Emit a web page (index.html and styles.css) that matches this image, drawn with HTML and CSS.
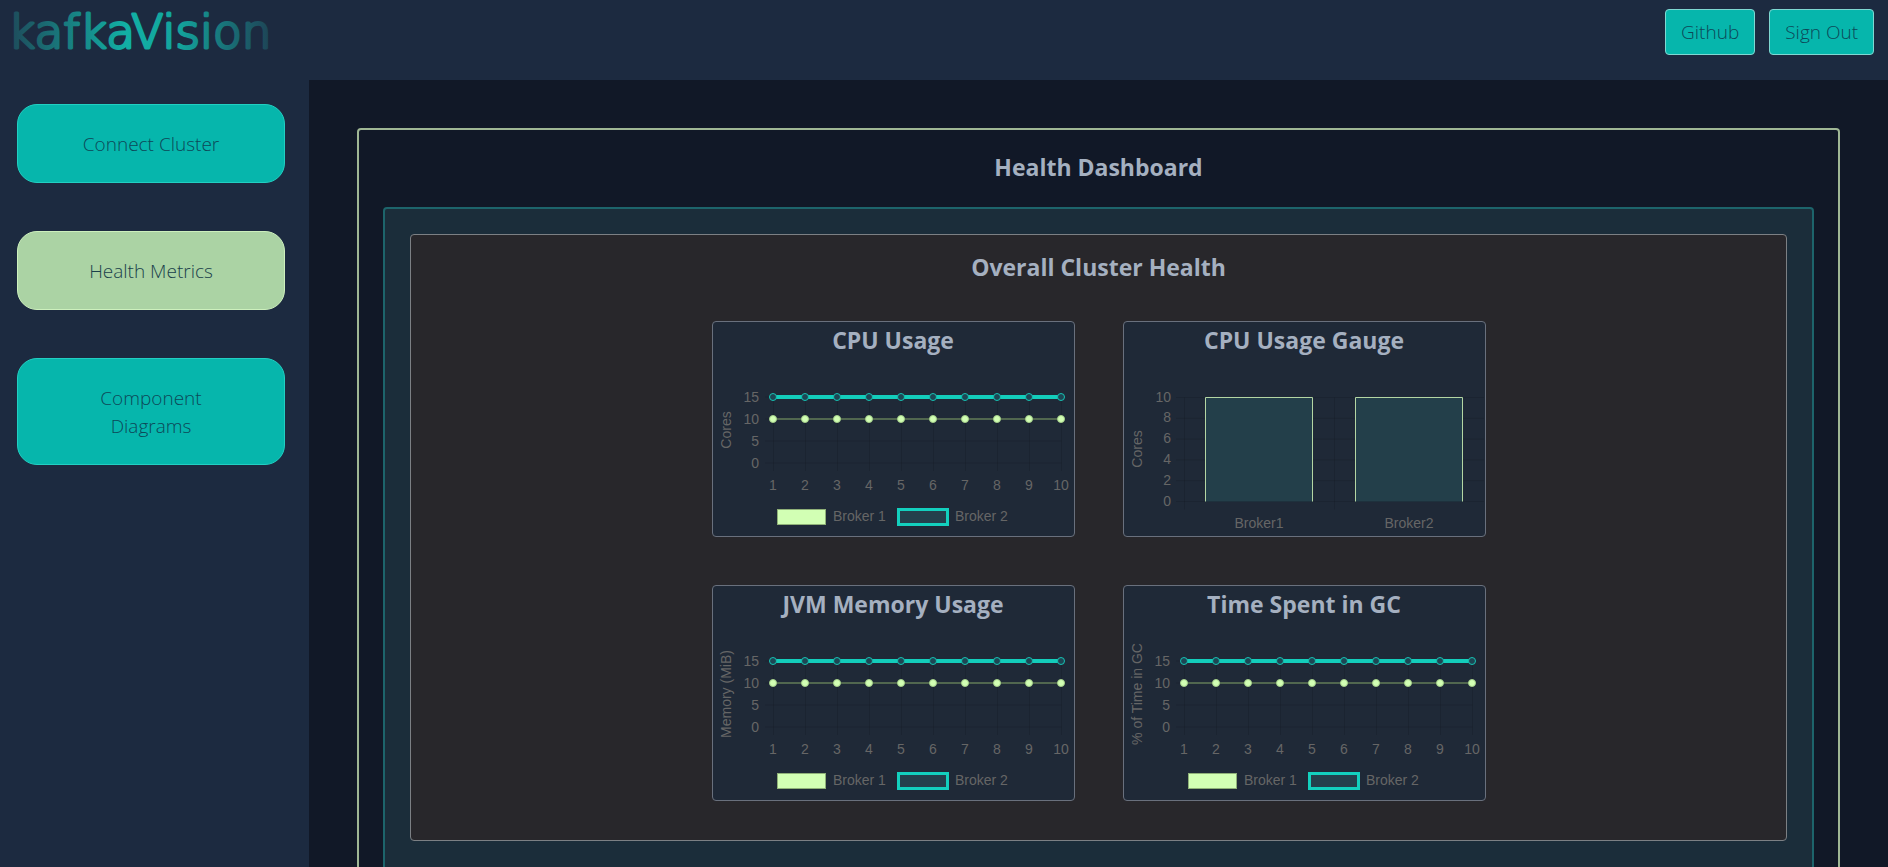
FILE: index.html
```html
<!DOCTYPE html>
<html lang="en">
<head>
  <meta charset="utf-8">
  <meta name="viewport" content="width=device-width, initial-scale=1">
  <title>kafkaVision</title>
  <link rel="stylesheet" href="styles.css">
</head>
<body>
  <div class="app">
    <header class="topbar">
      <svg class="logo" width="280" height="72" viewBox="0 0 280 72" role="img" aria-label="kafkaVision">
        <defs>
          <linearGradient id="logo-fade" gradientUnits="userSpaceOnUse" x1="0" y1="0" x2="264" y2="0">
            <stop offset="0" stop-color="#1e4a5a"/>
            <stop offset="0.45" stop-color="#12b0a5"/>
            <stop offset="0.65" stop-color="#13a39c"/>
            <stop offset="1" stop-color="#1e4255"/>
          </linearGradient>
        </defs>
        <text class="logo-text" x="0" y="48">kafkaVision</text>
      </svg>
      <nav class="topbar-actions">
        <a class="action" href="#github">Github</a>
        <button class="action" type="button">Sign Out</button>
      </nav>
    </header>

    <div class="body">
      <nav class="sidebar">
        <button class="nav-button" type="button">Connect Cluster</button>
        <button class="nav-button nav-button-active" type="button">Health Metrics</button>
        <button class="nav-button" type="button">Component Diagrams</button>
      </nav>

      <main class="main">
        <section class="dashboard">
          <h1 class="heading">Health Dashboard</h1>
          <div class="metrics">
            <section class="cluster">
              <h2 class="heading">Overall Cluster Health</h2>
              <div class="cards">
                <article class="card">
                  <h3 class="heading">CPU Usage</h3>
                  <svg class="chart" viewBox="0 0 361 180" data-kind="line" data-axis="Cores"></svg>
                </article>
                <article class="card">
                  <h3 class="heading">CPU Usage Gauge</h3>
                  <svg class="chart" viewBox="0 0 361 180" data-kind="bar" data-axis="Cores"></svg>
                </article>
                <article class="card">
                  <h3 class="heading">JVM Memory Usage</h3>
                  <svg class="chart" viewBox="0 0 361 180" data-kind="line" data-axis="Memory (MiB)"></svg>
                </article>
                <article class="card">
                  <h3 class="heading">Time Spent in GC</h3>
                  <svg class="chart" viewBox="0 0 361 180" data-kind="line" data-axis="% of Time in GC"></svg>
                </article>
              </div>
            </section>
          </div>
        </section>
      </main>
    </div>
  </div>
  <script src="charts.js"></script>
</body>
</html>
```

FILE: styles.css
```css
* {
  box-sizing: border-box;
}

body {
  margin: 0;
  background: #111827;
  color: #a5b0c0;
  font-family: "Segoe UI", "Open Sans", sans-serif;
}

.app {
  display: flex;
  flex-direction: column;
  height: 100vh;
}

.topbar {
  display: flex;
  flex: none;
  justify-content: space-between;
  align-items: flex-start;
  height: 80px;
  padding: 0 14px 0 8px;
  background: #1c2a40;
}

.logo-text {
  font-family: "DejaVu Sans", sans-serif;
  font-size: 47px;
  font-weight: 200;
  fill: url(#logo-fade);
  stroke: url(#logo-fade);
  stroke-width: 3px;
  stroke-linejoin: round;
}

.topbar-actions {
  display: flex;
  gap: 14px;
  padding-top: 9px;
}

.action {
  padding: 8px 15px;
  border: 1px solid #7fd8d2;
  border-radius: 4px;
  background: #06b6ac;
  color: #0d4858;
  font-family: inherit;
  font-size: 19px;
  font-weight: 300;
  line-height: 28px;
  text-decoration: none;
}

.body {
  display: flex;
  flex: 1;
  min-height: 0;
}

.sidebar {
  display: flex;
  flex: none;
  flex-direction: column;
  gap: 48px;
  width: 309px;
  padding: 24px 24px 24px 17px;
  background: #1c2a40;
}

.nav-button {
  padding: 25px 64px 24px;
  border: 1px solid #22cfc2;
  border-radius: 20px;
  background: #06b6ac;
  color: #0d4858;
  font-family: inherit;
  font-size: 19px;
  font-weight: 300;
  line-height: 28px;
}

.nav-button-active {
  border-color: #cdf0bd;
  background: #abd3a4;
  color: #1a3f4b;
}

.main {
  flex: 1;
  min-width: 0;
  padding: 48px;
  overflow: auto;
  scrollbar-width: none;
}

.dashboard {
  min-height: 100vh;
  padding: 21px 24px 24px;
  border: 2px solid #a0b795;
  border-radius: 4px;
}

.heading {
  margin: 0;
  font-size: 23px;
  font-weight: 700;
  line-height: 32px;
  text-align: center;
}

.metrics {
  min-height: 100vh;
  margin-top: 24px;
  padding: 25px;
  border: 2px solid #1d646b;
  border-radius: 4px;
  background: #1b2d3a;
}

.cluster {
  padding: 16px 24px 39px;
  border: 1px solid #7c8084;
  border-radius: 4px;
  background: #28272b;
}

.cards {
  display: grid;
  grid-template-columns: repeat(2, 363px);
  justify-content: center;
  gap: 48px;
  margin-top: 38px;
}

.card {
  padding-top: 2px;
  overflow: hidden;
  border: 1px solid #69707d;
  border-radius: 4px;
  background: #1f2937;
}

.chart {
  display: block;
  width: 100%;
}

.chart text {
  fill: #666666;
  font-family: "Liberation Sans", Arial, sans-serif;
  font-size: 14px;
}

.grid-line {
  stroke: rgba(0, 0, 0, 0.1);
}

.series-one {
  fill: none;
  stroke: #86a86a;
}

.series-two {
  fill: none;
  stroke: #13cdbb;
  stroke-width: 4px;
}

.point-one {
  fill: #d2ffb4;
  stroke: #a4cf8a;
}

.point-two {
  fill: #1d4654;
  stroke: #17c3b4;
}

.key-one {
  fill: #d2ffb4;
  stroke: #8fb078;
}

.key-two {
  fill: #24404c;
  stroke: #13d0be;
  stroke-width: 3px;
}

.bar {
  fill: #233f4a;
}

.bar-edge {
  fill: none;
  stroke: #b4d6a3;
}
```

FILE: charts.js
```js
const SVG_NS = "http://www.w3.org/2000/svg";

function add(parent, tag, attrs, text) {
  const node = document.createElementNS(SVG_NS, tag);
  for (const name in attrs) node.setAttribute(name, attrs[name]);
  if (text !== undefined) node.textContent = text;
  parent.appendChild(node);
}

function line(svg, cls, x1, y1, x2, y2) {
  add(svg, "line", { class: cls, x1, y1, x2, y2 });
}

function label(svg, text, x, y, anchor) {
  add(svg, "text", { x, y, "text-anchor": anchor }, text);
}

function axisTitle(svg, y) {
  add(svg, "text", {
    transform: `translate(18 ${y}) rotate(-90)`,
    "text-anchor": "middle"
  }, svg.dataset.axis);
}

function drawLineChart(svg) {
  const left = 60, step = 32, bottom = 107, unit = 4.4;
  const yOf = value => bottom - value * unit;
  const right = left + step * 9 + 0.5;

  [0, 5, 10, 15].forEach(value => {
    line(svg, "grid-line", left - 8, yOf(value), right, yOf(value));
    label(svg, value, 46, yOf(value) + 5, "end");
  });
  for (let i = 0; i < 10; i++) {
    const x = left + i * step;
    line(svg, "grid-line", x + 0.5, yOf(15), x + 0.5, bottom + 8);
    label(svg, i + 1, x, 134, "middle");
  }
  line(svg, "series-two", left, yOf(15), right, yOf(15));
  line(svg, "series-one", left, yOf(10), right, yOf(10));
  for (let i = 0; i < 10; i++) {
    const cx = left + i * step;
    add(svg, "circle", { class: "point-two", cx, cy: yOf(15), r: 3.5 });
    add(svg, "circle", { class: "point-one", cx, cy: yOf(10), r: 3.5 });
  }
  add(svg, "rect", { class: "key-one", x: 64.5, y: 153.5, width: 48, height: 15 });
  label(svg, "Broker 1", 120, 165, "start");
  add(svg, "rect", { class: "key-two", x: 185.5, y: 153.5, width: 49, height: 15 });
  label(svg, "Broker 2", 242, 165, "start");
  axisTitle(svg, 74);
}

function drawBarChart(svg) {
  const bottom = 145.5, unit = 10.4;
  const yOf = value => bottom - value * unit;

  [0, 2, 4, 6, 8, 10].forEach(value => {
    line(svg, "grid-line", 52, yOf(value), 360, yOf(value));
    label(svg, value, 47, yOf(value) + 4, "end");
  });
  [60.5, 210.5].forEach(x => line(svg, "grid-line", x, yOf(10), x, bottom + 8));
  [{ name: "Broker1", x: 81.5 }, { name: "Broker2", x: 231.5 }].forEach(bar => {
    const top = yOf(10), width = 107;
    add(svg, "rect", { class: "bar", x: bar.x, y: top, width, height: bottom - top });
    add(svg, "path", { class: "bar-edge", d: `M${bar.x} ${bottom}V${top}h${width}V${bottom}` });
    label(svg, bar.name, bar.x + width / 2, 172, "middle");
  });
  axisTitle(svg, 93);
}

document.querySelectorAll(".chart").forEach(svg => {
  if (svg.dataset.kind === "bar") drawBarChart(svg);
  else drawLineChart(svg);
});
```
